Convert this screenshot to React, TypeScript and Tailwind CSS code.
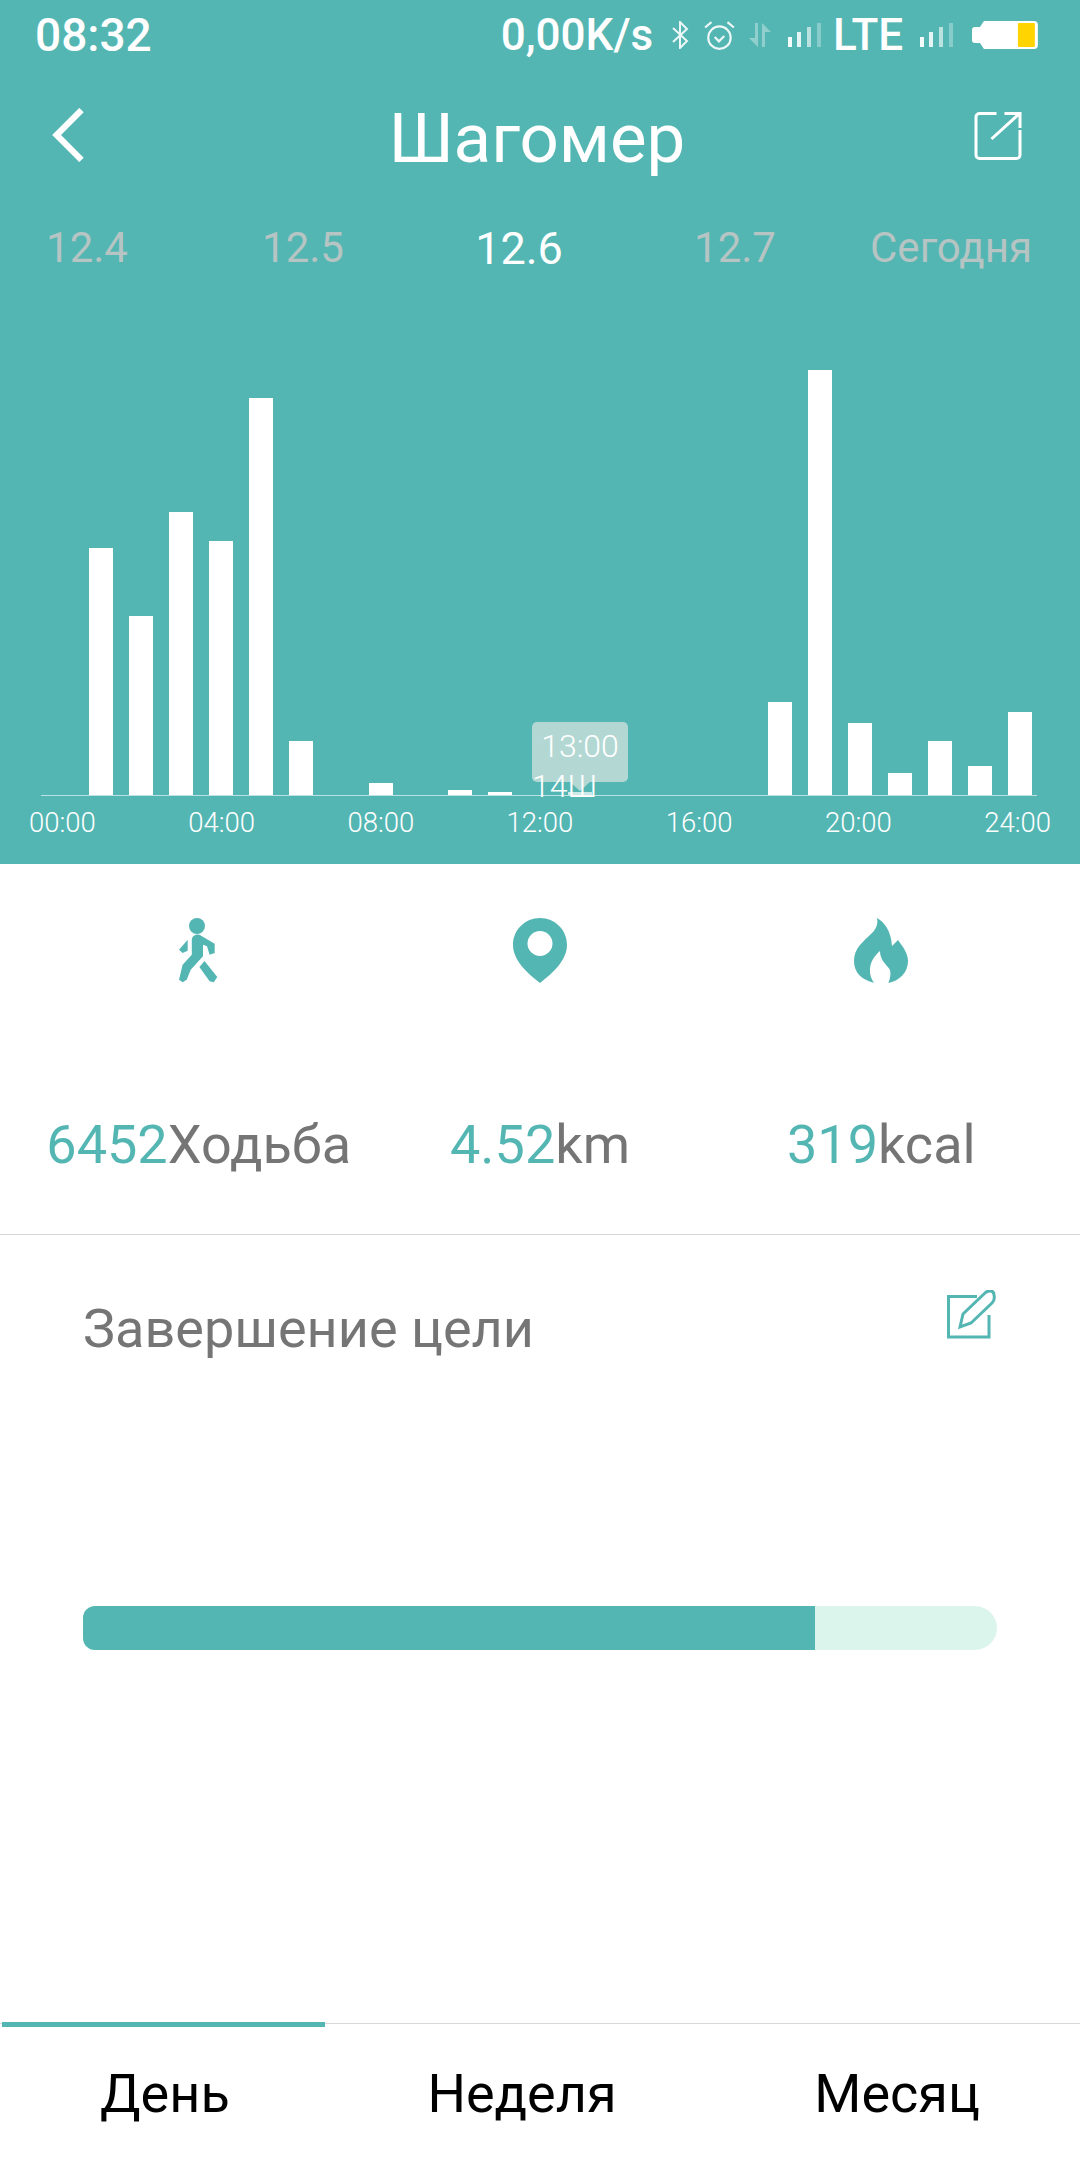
const HOURS = [247, 179, 283, 254, 397, 54, 0, 12, 0, 5, 3, 0, 3, 0, 0, 0, 0, 93, 425, 72, 22, 54, 29, 83];
const AXIS = ["00:00", "04:00", "08:00", "12:00", "16:00", "20:00", "24:00"];

function SignalBars() {
  return (
    <svg width="34" height="24" viewBox="0 0 34 24" fill="#fff">
      <rect x="0" y="14" width="4" height="10" opacity="0.95" />
      <rect x="9" y="9" width="4" height="15" opacity="0.85" />
      <rect x="19" y="4" width="4" height="20" opacity="0.6" />
      <rect x="29" y="0" width="4" height="24" opacity="0.3" />
    </svg>
  );
}

function StatusBar() {
  return (
    <div className="flex h-[70px] items-center pl-[35px] pr-[42px] text-white font-medium text-[46px] leading-none">
      <span>08:32</span>
      <span className="ml-[349px] text-[44px]">0,00K/s</span>
      <svg className="ml-[18px]" width="18" height="28" viewBox="0 0 18 28" fill="none" stroke="#fff" strokeWidth="2" opacity="0.9">
        <path d="M2 7l14 13-7 7V1l7 7L2 21" />
      </svg>
      <svg className="ml-[15px]" width="31" height="31" viewBox="0 0 29 29" fill="none" stroke="#fff" strokeWidth="2" opacity="0.9">
        <circle cx="14.5" cy="16.5" r="10.5" />
        <path d="M10 16l4 4 5-5M1 7l6-5M28 7l-6-5" />
      </svg>
      <svg className="ml-[14px]" width="24" height="24" viewBox="0 0 24 24" fill="#fff" opacity="0.35">
        <path d="M6 0h3v24L0 15h6zM13 0l9 9h-6v15h-3z" />
      </svg>
      <div className="ml-[15px]">
        <SignalBars />
      </div>
      <span className="ml-[11px] text-[44px]">LTE</span>
      <div className="ml-[17px]">
        <SignalBars />
      </div>
      <svg className="ml-[18px]" width="66" height="28" viewBox="0 0 66 28">
        <path d="M12 0h50a4 4 0 0 1 4 4v20a4 4 0 0 1-4 4H12L8 22H3a3 3 0 0 1-3-3V9a3 3 0 0 1 3-3h5z" fill="#fff" />
        <rect x="46" y="2" width="17" height="24" rx="1" fill="#ffd400" />
      </svg>
    </div>
  );
}

function Header() {
  return (
    <div className="grid h-[130px] grid-cols-[1fr_auto_1fr] items-center pl-[52px] pr-[58px]">
      <svg width="32" height="54" viewBox="0 0 30 52" fill="none" stroke="#fff" strokeWidth="6">
        <path d="M28 2L4 26l24 24" />
      </svg>
      <h1 className="mt-[6px] text-[69px] font-normal leading-none text-white">Шагомер</h1>
      <svg className="ml-auto mt-[2px]" width="48" height="48" viewBox="0 0 47 48" fill="none" stroke="#fff" strokeWidth="3">
        <path d="M22 1.5H5A3.5 3.5 0 0 0 1.500 5v38A3.500 3.500 0 0 0 5 46.500h37a3.500 3.500 0 0 0 3.500-3.500V18" />
        <path d="M17 27L45 1.500M30 1.500h15.500V16" />
      </svg>
    </div>
  );
}

function DateRow() {
  return (
    <div className="-ml-[21px] mt-[18px] grid h-[60px] w-[1080px] grid-cols-5 items-center text-center text-[42px] leading-none text-[#b6c4c3]">
      <span>12.4</span>
      <span>12.5</span>
      <span className="text-[45px] text-white">12.6</span>
      <span>12.7</span>
      <span>Сегодня</span>
    </div>
  );
}

function Chart() {
  return (
    <div className="relative mt-[92px]">
      <div className="ml-[41px] mr-[43px] flex h-[426px] items-end gap-[15.95px] border-b border-white/60 pl-[48px]">
        {HOURS.map((h, i) => (
          <div
            key={i}
            className={i === 12 ? "w-6 shrink-0 bg-white/70" : "w-6 shrink-0 bg-white"}
            style={{ height: h }}
          />
        ))}
      </div>
      {/* selected hour tooltip */}
      <div className="absolute left-[532px] top-[352px] flex h-[60px] w-[96px] justify-center rounded-[5px] bg-[#b3d8d3] pt-[6px] text-[32px] font-light leading-[36px] text-white">
        13:00
      </div>
      <div className="absolute left-[570px] top-[412px] h-0 w-0 border-x-[10px] border-t-[9px] border-x-transparent border-t-[#b3d8d3]" />
      <span className="absolute left-[532px] top-[400px] text-[32px] font-light leading-[32px] text-white">14Ш</span>
      <div className="mt-[11px] flex justify-between px-[29px] text-[27.5px] font-light leading-[32px] text-white">
        {AXIS.map((t) => (
          <span key={t}>{t}</span>
        ))}
      </div>
    </div>
  );
}

function WalkIcon() {
  return (
    <svg width="40" height="65" viewBox="0 0 40 65" fill="#54b6b3">
      <circle cx="18" cy="8" r="8" />
      <path d="M20.400 16.700L35.700 25.700V35L30.600 36.700 28 28.300 24 26.700V38.300L11.700 51.700 7.700 61.700 3.600 64.300 0 61.700 3.600 46.700 12.800 36.700V21.700C13 18 17 16 20.400 16.700Z" />
      <path d="M8.700 21.700V32.700L3.600 35 0 31.700Z" />
      <path d="M25.500 43L38.300 59 34.700 64.300 30.600 63.300 20.400 49Z" />
    </svg>
  );
}

function PinIcon() {
  return (
    <svg width="54" height="65" viewBox="0 0 54 65" fill="#54b6b3">
      <path
        fillRule="evenodd"
        d="M27 0C42 0 54 12 54 27C54 42 40 55 27 65C14 55 0 42 0 27C0 12 12 0 27 0ZM27 13a12.500 12.500 0 1 0 0 25a12.500 12.500 0 1 0 0-25Z"
      />
    </svg>
  );
}

function FlameIcon() {
  return (
    <svg width="54" height="65" viewBox="0 0 54 65">
      <path
        fill="#54b6b3"
        d="M23 0C30 4 37 12 38 28L44 22C50 30 54 36 54 43C54 55 45 63 34 65L21 65C8 62 0 55 0 43C0 30 9 24 18 15C23 10 24 5 23 0Z"
      />
      <path fill="#fff" d="M21 66C14 58 13 44 26 33C26 42 32 46 36 52C37 57 36 61 34 66Z" />
    </svg>
  );
}

function Stat({ icon, value, unit }: { icon: React.ReactNode; value: string; unit: string }) {
  return (
    <div className="flex flex-col items-center">
      <div className="flex h-[65px] items-center">{icon}</div>
      <div className="mt-[127px] text-[54px] leading-[70px] text-[#757575]">
        <span className="text-[#54b6b3]">{value}</span>
        {unit}
      </div>
    </div>
  );
}

function Tabs() {
  return (
    <div className="relative mt-auto flex h-[137px] justify-between border-t border-[#d8d8d8] px-[100px] pt-[35px] text-[54px] leading-[70px] text-black">
      <div className="absolute left-[2px] -top-[2px] h-[5px] w-[323px] bg-[#54b6b3]" />
      <span>День</span>
      <span>Неделя</span>
      <span>Месяц</span>
    </div>
  );
}

export default function App() {
  return (
    <div className="flex h-[2160px] w-[1080px] flex-col overflow-hidden bg-white font-[Roboto]">
      <section className="h-[864px] shrink-0 bg-[#54b6b3]">
        <StatusBar />
        <Header />
        <DateRow />
        <Chart />
      </section>

      <div className="grid h-[371px] grid-cols-3 border-b border-[#d8d8d8] px-[28px] pt-[54px]">
        <Stat icon={<WalkIcon />} value="6452" unit="Ходьба" />
        <Stat icon={<PinIcon />} value="4.52" unit="km" />
        <Stat icon={<FlameIcon />} value="319" unit="kcal" />
      </div>

      <div className="flex items-start justify-between pl-[83px] pr-[83px] pt-[55px]">
        <h2 className="mt-[7px] text-[54px] font-normal leading-[64px] text-[#757575]">Завершение цели</h2>
        <svg width="50" height="50" viewBox="0 0 50 50" fill="none" stroke="#54b6b3" strokeWidth="3">
          <path d="M30 6.500H1.500V47H42V25" />
          <path d="M13 37L16 24L38 3C41 0 47 0 47 5C48 9 47 11 45 13L24 33Z" />
        </svg>
      </div>

      <div className="mx-[83px] mt-[245px] h-[44px] overflow-hidden rounded-l-[12px] rounded-r-[22px] bg-[#dcf5ec]">
        <div className="h-full w-[732px] bg-[#54b6b3]" />
      </div>

      <Tabs />
    </div>
  );
}
